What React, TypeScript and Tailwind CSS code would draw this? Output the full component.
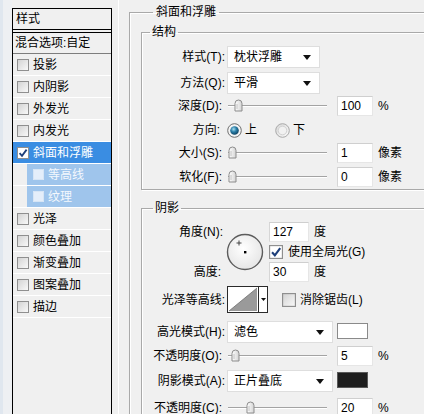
import React from 'react';

const font = "font-['Liberation_Sans','Noto_Sans_CJK_SC',sans-serif]";

type Item = { label: string; active?: boolean; sub?: boolean; checked?: boolean };

const items: Item[] = [
  { label: '投影' },
  { label: '内阴影' },
  { label: '外发光' },
  { label: '内发光' },
  { label: '斜面和浮雕', active: true, checked: true },
  { label: '等高线', sub: true },
  { label: '纹理', sub: true },
  { label: '光泽' },
  { label: '颜色叠加' },
  { label: '渐变叠加' },
  { label: '图案叠加' },
  { label: '描边' },
];

function Check({ checked, size = 12, light }: { checked?: boolean; size?: number; light?: boolean }) {
  return (
    <svg width={size} height={size} viewBox="0 0 12 12" className="shrink-0">
      <defs>
        <linearGradient id="cbg" x1="0" y1="0" x2="1" y2="1">
          <stop offset="0" stopColor="#d2d2d2" />
          <stop offset="1" stopColor="#fafafa" />
        </linearGradient>
      </defs>
      <rect
        x="0.5"
        y="0.5"
        width="11"
        height="11"
        fill={checked ? '#ffffff' : light ? '#e4eefa' : 'url(#cbg)'}
        stroke={light ? '#d8e6f6' : '#8f8f8f'}
      />
      {checked && <path d="M2.6 6.2 L5 8.8 L9.6 2.6" fill="none" stroke="#1e3f7a" strokeWidth="1.8" />}
    </svg>
  );
}

function SidePanel() {
  return (
    <div className="w-[100px] mt-[8px] border-x border-t border-black flex flex-col bg-[#f0f0f0] shrink-0">
      <div className="h-[21px] border-b border-black pl-[3px] text-[12px] leading-[20px]">样式</div>
      <div className="h-[2px]" />
      <div className="border-t border-black flex-1 flex flex-col">
        <div className="h-[21px] border-b border-[#7d7d7d] pl-[2px] text-[12px] leading-[20px]">混合选项:自定</div>
        {items.map((it) => (
          <div
            key={it.label}
            className={`h-[22px] border-b border-white flex ${it.active ? 'bg-[#3a8de2]' : ''} ${it.sub ? 'pl-[14px]' : ''}`}
          >
            <div
              className={`flex-1 flex items-center text-[12px] ${it.sub ? 'bg-[#9fc5ec] pl-[6px] text-[#f4f8fd]' : 'pl-[4px]'} ${
                it.active ? 'text-white' : ''
              }`}
            >
              <Check checked={it.checked} size={it.sub ? 11 : 12} light={it.sub} />
              <span className="ml-[4px] leading-[20px]">{it.label}</span>
            </div>
          </div>
        ))}
        <div className="flex-1" />
      </div>
    </div>
  );
}

function Dropdown({ value, width }: { value: string; width: string }) {
  return (
    <div className={`${width} h-[22px] bg-white border border-[#dedede] flex items-center pl-[6px] pr-[8px] shrink-0`}>
      <span className="flex-1 text-[12px] leading-[20px]">{value}</span>
      <svg width="8" height="5" viewBox="0 0 8 5">
        <path d="M0 0 H8 L4 5 Z" fill="#111" />
      </svg>
    </div>
  );
}

function Field({ value, width = 'w-[36px]' }: { value: string; width?: string }) {
  return (
    <div
      className={`${width} h-[20px] bg-white border border-[#e6e6e6] border-t-[#cfcfcf] border-l-[#d6d6d6] pl-[3px] text-[12px] leading-[18px] shrink-0`}
    >
      {value}
    </div>
  );
}

function Slider({ offset }: { offset: string }) {
  return (
    <div className="relative w-[99px] h-[20px] ml-[6px] shrink-0">
      <div className="absolute left-0 right-0 top-[9px] h-px bg-[#a3a3a3]" />
      <div className="absolute left-0 right-0 top-[10px] h-px bg-white" />
      <svg width="9" height="13" viewBox="0 0 9 13" className={`absolute top-[3px] ${offset}`}>
        <defs>
          <linearGradient id="thumb" x1="0" y1="0" x2="1" y2="0">
            <stop offset="0" stopColor="#ffffff" />
            <stop offset="1" stopColor="#d4d4d4" />
          </linearGradient>
        </defs>
        <path d="M1 4.5 Q1 1 4.5 1 Q8 1 8 4.5 L8 12 L1 12 Z" fill="url(#thumb)" stroke="#8c8c8c" />
        <path d="M3 5 V10" stroke="#c4c4c4" />
      </svg>
    </div>
  );
}

function SliderRow({ label, value, unit, offset, className = '' }: { label: string; value: string; unit: string; offset: string; className?: string }) {
  return (
    <div className={`flex items-center h-[20px] ${className}`}>
      <div className="w-[80px] text-right text-[12px] leading-[20px] shrink-0">{label}</div>
      <Slider offset={offset} />
      <div className="ml-[10px]">
        <Field value={value} />
      </div>
      <span className="ml-[5px] text-[12px] leading-[20px]">{unit}</span>
    </div>
  );
}

function Radio({ on }: { on?: boolean }) {
  return (
    <svg width="15" height="15" viewBox="0 0 15 15" className="shrink-0">
      <defs>
        <radialGradient id="rOn" cx="0.4" cy="0.35" r="0.7">
          <stop offset="0" stopColor="#a9e0f2" />
          <stop offset="0.45" stopColor="#2b7fa8" />
          <stop offset="1" stopColor="#0b3c5a" />
        </radialGradient>
        <linearGradient id="rOff" x1="0" y1="0" x2="1" y2="1">
          <stop offset="0" stopColor="#d6d6d6" />
          <stop offset="1" stopColor="#fbfbfb" />
        </linearGradient>
      </defs>
      <circle cx="7.5" cy="7.5" r="6.8" fill={on ? '#f4f4f4' : 'url(#rOff)'} stroke={on ? '#6f6f6f' : '#a8a8a8'} />
      {on ? (
        <circle cx="7.5" cy="7.5" r="4.3" fill="url(#rOn)" />
      ) : (
        <circle cx="7.5" cy="7.5" r="4.3" fill="#f1f1f1" stroke="#d0d0d0" />
      )}
    </svg>
  );
}

function Dial() {
  return (
    <svg width="38" height="38" viewBox="0 0 38 38" className="shrink-0">
      <defs>
        <radialGradient id="dial" cx="0.45" cy="0.4" r="0.65">
          <stop offset="0" stopColor="#ffffff" />
          <stop offset="1" stopColor="#e4e4e4" />
        </radialGradient>
      </defs>
      <circle cx="19" cy="19" r="17.5" fill="url(#dial)" stroke="#5c5c5c" strokeWidth="1.4" />
      <path d="M13 7.5 V12.5 M10.5 10 H15.5" stroke="#333" strokeWidth="0.9" />
      <rect x="18" y="18" width="2.4" height="2.4" fill="#000" />
    </svg>
  );
}

function Contour() {
  return (
    <div className="w-[41px] h-[27px] border border-[#2a2a2a] bg-white flex shrink-0">
      <svg width="30" height="25" viewBox="0 0 30 25" className="shrink-0">
        <path d="M1 24 L29 1 L29 24 Z" fill="#9a9a9a" />
        <path d="M1 24 L29 1" stroke="#6f6f6f" strokeWidth="0.8" />
      </svg>
      <div className="w-px bg-[#2a2a2a]" />
      <div className="flex-1 flex items-center justify-center">
        <svg width="5" height="3" viewBox="0 0 5 3">
          <path d="M0 0 H5 L2.5 3 Z" fill="#111" />
        </svg>
      </div>
    </div>
  );
}

const groupBorder = 'border border-[#a9a9a9] shadow-[inset_1px_1px_0_#ffffff,1px_1px_0_#ffffff]';

export default function App() {
  return (
    <div className={`w-[424px] h-[414px] overflow-hidden bg-[#f0f0f0] flex text-black ${font}`}>
      <div className="w-[12px] shrink-0 bg-[#eef0f3] border-l-[3px] border-[#e0e7ef]" />
      <SidePanel />
      <div className="w-[17px] shrink-0 flex">
        <div className="w-[6px]" />
        <div className="w-px bg-white" />
      </div>

      <div className="pt-[4px] shrink-0">
        <fieldset className={`w-[320px] pl-[11px] pb-[10px] ${groupBorder}`}>
          <legend className="ml-[12px] px-[3px] text-[12px] leading-[16px]">斜面和浮雕</legend>

          <fieldset className={`mt-[4px] w-[320px] pt-[6px] pb-[2px] ${groupBorder}`}>
            <legend className="ml-[8px] px-[2px] text-[12px] leading-[16px]">结构</legend>

            <div className="flex items-center h-[22px]">
              <div className="w-[83px] text-right text-[12px] leading-[20px] shrink-0">样式(T):</div>
              <div className="ml-[2px]">
                <Dropdown value="枕状浮雕" width="w-[93px]" />
              </div>
            </div>
            <div className="flex items-center h-[22px] mt-[4px]">
              <div className="w-[83px] text-right text-[12px] leading-[20px] shrink-0">方法(Q):</div>
              <div className="ml-[2px]">
                <Dropdown value="平滑" width="w-[93px]" />
              </div>
            </div>

            <SliderRow label="深度(D):" value="100" unit="%" offset="left-[6px]" className="mt-[2px]" />

            <div className="flex items-center h-[20px] mt-[4px]">
              <div className="w-[78px] text-right text-[12px] leading-[20px] shrink-0">方向:</div>
              <div className="ml-[7px] flex items-center">
                <Radio on />
                <span className="ml-[3px] text-[12px] leading-[20px]">上</span>
              </div>
              <div className="ml-[18px] flex items-center">
                <Radio />
                <span className="ml-[3px] text-[12px] leading-[20px]">下</span>
              </div>
            </div>

            <SliderRow label="大小(S):" value="1" unit="像素" offset="left-[0px]" className="mt-[3px]" />
            <SliderRow label="软化(F):" value="0" unit="像素" offset="left-[0px]" className="mt-[4px]" />
          </fieldset>

          <fieldset className={`mt-[10px] w-[320px] pt-[6px] pb-[20px] ${groupBorder}`}>
            <legend className="ml-[11px] px-[2px] text-[12px] leading-[16px]">阴影</legend>

            <div className="flex">
              <div className="w-[81px] shrink-0 flex flex-col text-right text-[12px] leading-[20px]">
                <div className="h-[20px]">角度(N):</div>
                <div className="h-[20px] mt-[20px] pr-[2px]">高度:</div>
              </div>
              <div className="ml-[3px] mt-[11px]">
                <Dial />
              </div>
              <div className="ml-[5px] flex flex-col">
                <div className="flex items-center h-[20px]">
                  <Field value="127" width="w-[40px]" />
                  <span className="ml-[5px] text-[12px] leading-[20px]">度</span>
                </div>
                <div className="flex items-center h-[14px] mt-[3px]">
                  <Check checked size={14} />
                  <span className="ml-[5px] text-[12px] leading-[14px]">使用全局光(G)</span>
                </div>
                <div className="flex items-center h-[20px] mt-[3px]">
                  <Field value="30" width="w-[40px]" />
                  <span className="ml-[5px] text-[12px] leading-[20px]">度</span>
                </div>
              </div>
            </div>

            <div className="flex items-center h-[27px] mt-[4px]">
              <div className="w-[83px] text-right text-[12px] leading-[20px] shrink-0">光泽等高线:</div>
              <div className="ml-[2px]">
                <Contour />
              </div>
              <div className="ml-[14px] flex items-center">
                <Check size={14} />
                <span className="ml-[4px] text-[12px] leading-[20px]">消除锯齿(L)</span>
              </div>
            </div>

            <div className="flex items-center h-[22px] mt-[8px]">
              <div className="w-[83px] text-right text-[12px] leading-[20px] shrink-0">高光模式(H):</div>
              <div className="ml-[2px]">
                <Dropdown value="滤色" width="w-[106px]" />
              </div>
              <div className="ml-[4px] w-[31px] h-[16px] bg-white border border-[#8a8a8a] -mt-[3px]" />
            </div>

            <SliderRow label="不透明度(O):" value="5" unit="%" offset="left-[3px]" className="mt-[3px]" />

            <div className="flex items-center h-[22px] mt-[4px]">
              <div className="w-[83px] text-right text-[12px] leading-[20px] shrink-0">阴影模式(A):</div>
              <div className="ml-[2px]">
                <Dropdown value="正片叠底" width="w-[106px]" />
              </div>
              <div className="ml-[4px] w-[31px] h-[16px] bg-[#1f1f1f] border border-[#5a5a5a] -mt-[2px]" />
            </div>

            <SliderRow label="不透明度(C):" value="20" unit="%" offset="left-[18px]" className="mt-[6px]" />
          </fieldset>
        </fieldset>
      </div>
    </div>
  );
}
